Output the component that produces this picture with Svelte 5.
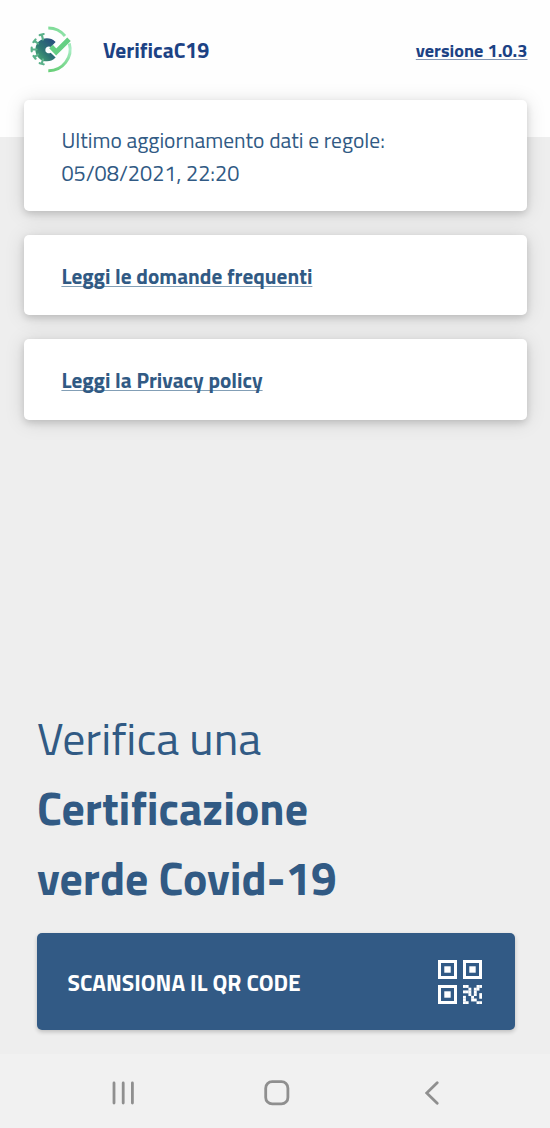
<script>
  const links = ['Leggi le domande frequenti', 'Leggi la Privacy policy'];
  const finders = [[0, 0], [25, 0], [0, 25]];
  const modules = [[0, 0], [1, 0], [5, 0], [6, 0], [2, 1], [4, 1], [5, 1], [0, 2], [1, 2], [2, 2], [4, 2], [2, 3], [4, 3], [6, 3], [0, 4], [3, 4], [6, 4], [0, 5], [3, 5], [4, 5], [0, 6], [1, 6], [5, 6], [6, 6]];
</script>

<main class="screen">
  <header>
    <svg class="logo" width="46" height="50" viewBox="28 24.5 46 50" fill="none">
      <defs>
        <linearGradient id="virus" x1="34" y1="58" x2="55" y2="40" gradientUnits="userSpaceOnUse">
          <stop offset="0" stop-color="#4cb075" /><stop offset=".45" stop-color="#2f7773" /><stop offset="1" stop-color="#254b7e" />
        </linearGradient>
        <linearGradient id="ring" x1="0" y1="27" x2="0" y2="71" gradientUnits="userSpaceOnUse">
          <stop offset="0" stop-color="#80dc98" /><stop offset=".5" stop-color="#a9edc5" /><stop offset="1" stop-color="#68cf78" />
        </linearGradient>
      </defs>
      <path d="M48.3 27.5A21.4 21.4 0 0 1 65 35.5M69.3 43A21.4 21.4 0 0 1 48.3 70.2" stroke="url(#ring)" stroke-width="3" />
      <path d="M54.5 41.5A10.8 10.8 0 1 0 54.5 57L50.5 53.2A4.2 4.2 0 1 1 50.5 45.6Z" fill="url(#virus)" stroke="url(#virus)" stroke-width="1.6" />
      <g stroke="#5bb18a" stroke-width="2.2" stroke-linecap="round">
        <path d="M43 39L41.7 34M39.7 34.6L43.7 33.5M38 43L34.5 40.3M33.4 41.6L35.6 39M36.5 49H32M31.7 47.2V50.8M38 54L34.5 56.7M33.5 55.5L35.6 58.2M43 59L41.7 63.2M39.7 62.7L43.7 63.8" />
      </g>
      <path d="M51 46L56.2 51.5L69 38.8" stroke="#65cf83" stroke-width="5" />
    </svg>
    <strong class="brand">VerificaC19</strong>
    <a class="version" href="#version">versione 1.0.3</a>
  </header>

  <section class="cards">
    <div class="card update">
      <p class="label">Ultimo aggiornamento dati e regole:</p>
      <p class="date">05/08/2021, 22:20</p>
    </div>
    {#each links as link}
      <div class="card"><a class="link" href="#info">{link}</a></div>
    {/each}
  </section>

  <section class="scan">
    <h1><span class="light">Verifica una</span><span>Certificazione</span><span>verde Covid-19</span></h1>
    <button>
      <span class="action">SCANSIONA IL QR CODE</span>
      <svg width="44" height="44" viewBox="0 0 44 44" fill="#fff">
        {#each finders as [x, y]}
          <rect x={x + 1.5} y={y + 1.5} width="16" height="16" fill="none" stroke="#fff" stroke-width="3" />
          <rect x={x + 6.3} y={y + 6.3} width="6.4" height="6.4" />
        {/each}
        {#each modules as [x, y]}
          <rect x={25 + x * 2.71} y={25 + y * 2.71} width="2.9" height="2.9" />
        {/each}
      </svg>
    </button>
  </section>

  <nav>
    <svg width="24" height="26" viewBox="0 0 24 26"><path d="M2 3V23M11.2 3V23M20.4 3V23" /></svg>
    <svg class="home" width="26" height="26" viewBox="0 0 26 26"><rect x="1.7" y="1.7" width="22.2" height="22.2" rx="6.5" /></svg>
    <svg width="14" height="26" viewBox="0 0 14 26"><path d="M12.2 2.7L1.7 13L12.2 23.3" /></svg>
  </nav>
</main>

<style>
  .screen { height: 1128px; display: flex; flex-direction: column; background: linear-gradient(#fefefe 137px, #eee 137px); font-family: "Titillium Web", Roboto, sans-serif; color: #315a84; white-space: nowrap; }
  header { height: 99px; display: flex; align-items: center; padding: 0 22.5px 0 28px; box-sizing: border-box; color: #1c4284; }
  .logo { margin-right: 29px; flex: none; }
  .brand { font-size: 21.5px; font-weight: 700; }
  a { color: inherit; text-decoration-thickness: 1px; text-underline-offset: 3px; text-decoration-skip-ink: none; }
  .version { margin-left: auto; font-size: 18.3px; font-weight: 700; text-decoration-color: #8295b2; text-underline-offset: 2px; }
  .cards { display: flex; flex-direction: column; gap: 24px; padding: 0.5px 22.8px 0 24.4px; }
  .card { height: 80.3px; border-radius: 5px; background: #fff; box-shadow: 0 3px 7px #00000024, 0 2px 20px #00000020; padding: 2px 0 0 37px; box-sizing: border-box; display: flex; align-items: center; }
  .update { height: 111.5px; padding-top: 3px; flex-direction: column; align-items: flex-start; justify-content: center; }
  p { margin: 0; font-size: 21.5px; line-height: 32.4px; font-weight: 400; }
  .date { font-size: 21.7px; }
  .link { font-size: 21.25px; font-weight: 700; line-height: 32px; text-decoration-color: #839fb6; text-underline-offset: 2px; }
  .scan { margin-top: auto; padding: 0 35px 24px 37px; }
  h1 { margin: 0 0 20px; font-size: 45.8px; line-height: 70px; }
  h1 span { display: block; }
  h1 .light { font-weight: 400; }
  button { width: 478px; height: 97px; border: 0; border-radius: 5px; background: #325a85; color: #fff; display: flex; align-items: center; justify-content: space-between; padding: 0 33px 0 30.5px; box-shadow: 0 2px 4px #0003; font: 700 22.8px "Titillium Web", Roboto, sans-serif; }
  .action { padding-top: 1px; }
  nav { height: 74px; flex: none; background: #f1f1f1; display: flex; align-items: center; justify-content: space-between; padding: 4px 111px 0 112px; box-sizing: border-box; }
  nav svg { fill: none; stroke: #8f8f8f; stroke-width: 2.8; stroke-linecap: round; }
  .home { margin-right: 7px; }
</style>
